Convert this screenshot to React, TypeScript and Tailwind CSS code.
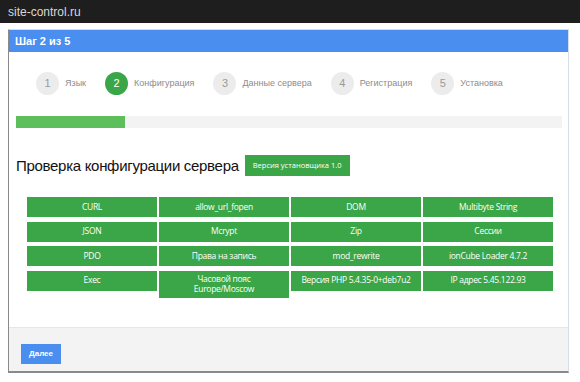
const steps = [
  { n: 1, label: "Язык" },
  { n: 2, label: "Конфигурация" },
  { n: 3, label: "Данные сервера" },
  { n: 4, label: "Регистрация" },
  { n: 5, label: "Установка" },
];

const checks = [
  "CURL",
  "allow_url_fopen",
  "DOM",
  "Multibyte String",
  "JSON",
  "Mcrypt",
  "Zip",
  "Сессии",
  "PDO",
  "Права на запись",
  "mod_rewrite",
  "ionCube Loader 4.7.2",
  "Exec",
  "Часовой пояс\nEurope/Moscow",
  "Версия PHP 5.4.35-0+deb7u2",
  "IP адрес 5.45.122.93",
];

export default function App() {
  const current = 2;

  return (
    <div className="w-[580px] h-[382px] overflow-hidden bg-white" style={{ fontFamily: "'Liberation Sans', Arial, sans-serif" }}>
      {/* Top bar */}
      <div className="h-[23px] bg-[#1e1e1e] px-2 flex items-center text-[12px] text-[#d8d8d8]">site-control.ru</div>

      {/* Wizard card */}
      <div className="mt-[6px] ml-2 w-[561px] h-[344px] flex flex-col border border-[#d6dde6] border-l-[#8a8a8a] border-b-[#8a8a8a] border-b-2">
        <div className="h-[22px] shrink-0 bg-[#4a8ef0] px-[6px] flex items-center text-[11px] font-bold text-white">
          Шаг 2 из 5
        </div>

        <div className="flex-1 bg-white">
          {/* Steps */}
          <div className="flex items-center gap-[19px] pl-[27px] pt-[20px]">
            {steps.map((s) => (
              <div key={s.n} className="flex items-center gap-[6px]">
                <div
                  className={
                    s.n === current
                      ? "w-[23px] h-[23px] rounded-full bg-[#3aa648] text-white flex items-center justify-center text-[11px]"
                      : "w-[23px] h-[23px] rounded-full bg-[#ececec] text-[#9a9a9a] flex items-center justify-center text-[11px]"
                  }
                >
                  {s.n}
                </div>
                <span className="text-[9px] text-[#8c8c8c]">{s.label}</span>
              </div>
            ))}
          </div>

          {/* Progress */}
          <div className="mt-[21px] ml-[7px] mr-[6px] h-[12px] bg-[#f3f3f3]">
            <div className="h-full bg-[#5cbf5c]" style={{ width: `${(current - 1) * 20}%` }} />
          </div>

          {/* Heading */}
          <div className="mt-[27px] ml-[7px] flex items-center gap-[6px]">
            <h1 className="text-[15px] leading-[20px] text-[#111] tracking-[-0.3px]">Проверка конфигурации сервера</h1>
            <span
              className="h-[21px] px-[8px] bg-[#3aa648] text-white text-[7.5px] flex items-center"
              style={{ fontFamily: "'Open Sans', 'Noto Sans', sans-serif" }}
            >
              Версия установщика 1.0
            </span>
          </div>

          {/* Checks grid */}
          <div
            className="mt-[21px] ml-[18px] grid grid-cols-[repeat(4,130px)] gap-x-[2px] gap-y-[4.5px] items-start"
            style={{ fontFamily: "'Open Sans', 'Noto Sans', sans-serif" }}
          >
            {checks.map((c) => (
              <div
                key={c}
                className="min-h-[20px] py-[3px] bg-[#3aa648] text-white text-[8.5px] tracking-[-0.3px] leading-[10.5px] text-center flex items-center justify-center whitespace-pre-line"
              >
                {c}
              </div>
            ))}
          </div>
        </div>

        {/* Footer */}
        <div className="h-[44px] shrink-0 bg-[#f3f3f3] border-t border-[#e6e6e6] pl-[12px] pt-[11px]">
          <button className="w-[40px] h-[20px] bg-[#4a8ef0] text-white text-[8px] font-bold">Далее</button>
        </div>
      </div>
    </div>
  );
}
